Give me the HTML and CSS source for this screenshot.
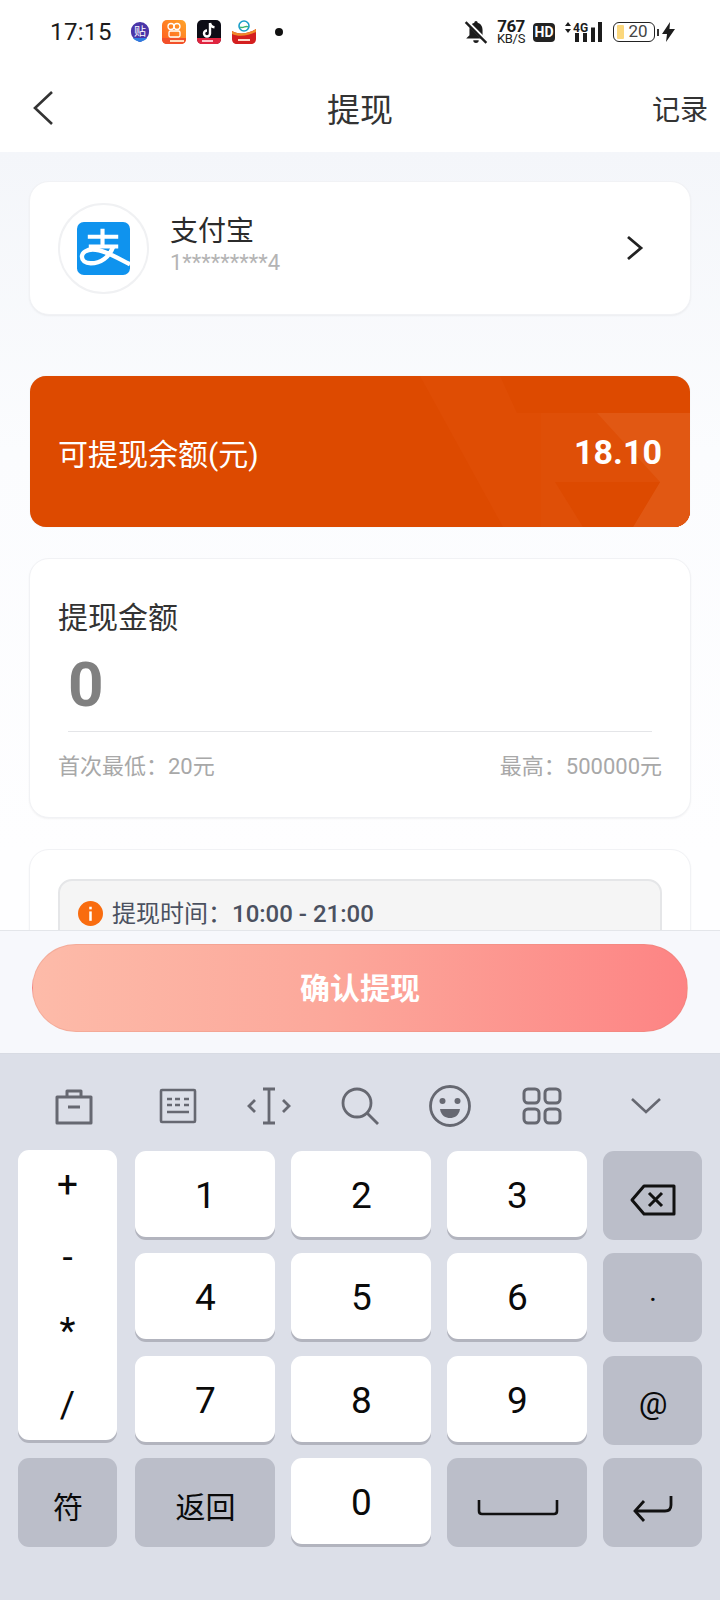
FILE: index.html
```html
<!DOCTYPE html>
<html lang="zh">
<head>
<meta charset="utf-8">
<title>提现</title>
<link rel="stylesheet" href="styles.css">
</head>
<body>
<div class="page">
  <div class="status">
    <span class="time">17:15</span>
    <svg class="app app-tie" viewBox="0 0 20 24"><path d="M10 2a9 9 0 0 1 9 10c0 5-4 8-9 10C5 20 1 17 1 12a9 9 0 0 1 9-10z" fill="#4a35a8"/><path d="M3 18c2 3 5 3 7 4 2-1 5-1 7-4z" fill="#2f7de0"/><text x="10" y="16" class="app-txt">贴</text></svg>
    <svg class="app app-ks" viewBox="0 0 24 24"><defs><linearGradient id="ks" x1="0" y1="1" x2="1" y2="0"><stop offset="0" stop-color="#ff5a1e"/><stop offset="1" stop-color="#ffa52a"/></linearGradient></defs><rect width="24" height="24" rx="5" fill="url(#ks)"/><circle cx="9" cy="6.5" r="3" fill="none" stroke="#fff" stroke-width="1.3"/><circle cx="15" cy="6.5" r="3" fill="none" stroke="#fff" stroke-width="1.3"/><rect x="7" y="11" width="11" height="6" rx="1.5" fill="none" stroke="#fff" stroke-width="1.3"/><path d="M0 18h24v1c0 3-2 5-5 5H5c-3 0-5-2-5-5z" fill="#f2502a"/><rect x="8" y="20" width="14" height="2" fill="#ffe0c0"/></svg>
    <svg class="app app-tt" viewBox="0 0 24 24"><rect width="24" height="24" rx="5" fill="#0d0d16"/><path d="M13 3v10.5a3 3 0 1 1-3-3M13 3c.4 2.500 2 4 4.500 4.300" fill="none" stroke="#fff" stroke-width="2.400"/><path d="M0 18h24v1c0 3-2 5-5 5H5c-3 0-5-2-5-5z" fill="#e0243f"/><rect x="5" y="20" width="11" height="2" fill="#ffc4cc"/></svg>
    <svg class="app app-cm" viewBox="0 0 24 24"><circle cx="12" cy="6" r="5" fill="none" stroke="#1a9ec9" stroke-width="1.600"/><path d="M8 7c3 2 6-2 8 0" fill="none" stroke="#3bb56b" stroke-width="1.400"/><path d="M0 11c6 4 16 3 24-2v10c0 3-2 5-5 5H5c-3 0-5-2-5-5z" fill="#d41f1f"/><path d="M0 11c6 4 16 3 24-2v3c-8 4-18 5-24 2z" fill="#f08a2a"/><rect x="6" y="19" width="12" height="2" fill="#ffd9c9"/></svg>
    <span class="dot"></span>
    <span class="status-space"></span>
    <svg class="bell" viewBox="0 0 22 22"><path d="M11 1c-.9 0-1.500.7-1.500 1.500C6.500 3.300 5 6.300 5 9v5l-3 3h18l-3-3V9c0-2.700-1.500-5.700-4.500-6.500C12.500 1.700 11.900 1 11 1zM8.500 18.500a2.500 2.500 0 0 0 5 0z" fill="#1c1c1c"/><path d="M2.500 1.500L21 20" stroke="#fff" stroke-width="3.500"/><path d="M1.500 2L20.500 21" stroke="#1c1c1c" stroke-width="2.200"/></svg>
    <span class="speed"><b>767</b><i>KB/S</i></span>
    <span class="hd">HD</span>
    <span class="net">
      <svg viewBox="0 0 40 22" class="net-svg"><path d="M1 5l3-4 3 4zM1 8l3 4 3-4z" fill="#1c1c1c"/><text x="9" y="11" class="net-txt">4G</text><rect x="11" y="12" width="4" height="9" fill="#1c1c1c"/><rect x="19" y="12" width="4" height="9" fill="#1c1c1c"/><rect x="27" y="6.500" width="4" height="14.500" fill="#1c1c1c"/><rect x="34" y="1" width="4" height="20" fill="#1c1c1c"/></svg>
    </span>
    <span class="battery"><span class="bat-fill"></span><span class="bat-num">20</span></span>
    <span class="nub"></span>
    <svg class="bolt" viewBox="0 0 13 20"><path d="M8 0L0 12h5l-1 8 9-13H7.500z" fill="#1c1c1c"/></svg>
  </div>

  <header class="header">
    <svg class="back" viewBox="0 0 22 36"><path d="M20 2L3 18l17 16" fill="none" stroke="#333" stroke-width="2.600"/></svg>
    <h1 class="title">提现</h1>
    <span class="record">记录</span>
  </header>

  <main class="main">
    <section class="card pay">
      <div class="logo-ring">
        <svg class="logo" viewBox="0 0 54 54"><rect width="54" height="54" rx="7" fill="#0f93ee"/><path d="M26 7v18M11 15h31M12 25h30" fill="none" stroke="#fff" stroke-width="4.200"/><path d="M37 25C33 36 24 42 14 42 8 42 5 39 5 35.500 5 31 10 28 16 28c10 0 22 7 38 15" fill="none" stroke="#fff" stroke-width="4.400"/></svg>
      </div>
      <div class="pay-text">
        <div class="pay-name">支付宝</div>
        <div class="pay-acc">1*********4</div>
      </div>
      <svg class="chev" viewBox="0 0 18 26"><path d="M2 2l13 11L2 24" fill="none" stroke="#222" stroke-width="2.800"/></svg>
    </section>

    <section class="balance">
      <svg class="balance-bg" viewBox="0 0 660 151" preserveAspectRatio="none"><path d="M390 0h80l17 37h173v114H473z" fill="#df4d04"/><path d="M511 37h149v114H511z" fill="#df4f07"/><path d="M567 37h93v114H603l27-45z" fill="#e15813"/><path d="M525 106h105l-27 45h-50z" fill="#dd4a00"/></svg>
      <span class="bal-label">可提现余额(元)</span>
      <span class="bal-num">18.10</span>
    </section>

    <section class="card amount">
      <div class="amt-title">提现金额</div>
      <div class="amt-val">0</div>
      <div class="amt-line"></div>
      <div class="amt-foot"><span>首次最低：20元</span><span>最高：500000元</span></div>
    </section>

    <section class="card notice">
      <div class="notice-box">
        <svg class="info" viewBox="0 0 24 24"><circle cx="12" cy="12" r="12" fill="#f96c0f"/><rect x="10.800" y="10" width="2.400" height="9" fill="#fff"/><rect x="10.800" y="5.500" width="2.400" height="2.500" fill="#fff"/></svg>
        <span class="notice-text">提现时间：<span class="notice-num">10:00 - 21:00</span></span>
      </div>
    </section>
  </main>

  <div class="footer">
    <button class="confirm">确认提现</button>
  </div>

  <div class="kb">
    <div class="tools">
      <span class="tool"><svg width="40" height="38" viewBox="0 0 40 38"><path d="M3 10h34v26H3zM13 10V4h14v6M14 20h12" fill="none" stroke="#666871" stroke-width="3" stroke-linejoin="round"/></svg></span>
      <span class="tool"><svg width="38" height="36" viewBox="0 0 38 36"><rect x="2" y="2" width="34" height="32" fill="none" stroke="#666871" stroke-width="2.600" rx="1"/><path d="M8 11h5M16 11h5M25 11h5M8 17h5M16 17h5M25 17h5M8 24h22" stroke="#666871" stroke-width="2.600"/></svg></span>
      <span class="tool"><svg width="44" height="38" viewBox="0 0 44 38"><path d="M20 2h12M26 2v34M20 36h12" transform="translate(-4)" fill="none" stroke="#666871" stroke-width="2.800"/><path d="M8 13l-6 6 6 6M36 13l6 6-6 6" fill="none" stroke="#666871" stroke-width="2.800"/></svg></span>
      <span class="tool"><svg width="40" height="40" viewBox="0 0 40 40"><circle cx="17" cy="17" r="14" fill="none" stroke="#666871" stroke-width="2.800"/><path d="M27 27l11 11" stroke="#666871" stroke-width="2.800"/></svg></span>
      <span class="tool"><svg width="44" height="42" viewBox="0 0 44 42"><circle cx="22" cy="21" r="19.500" fill="none" stroke="#666871" stroke-width="2.800"/><circle cx="14.500" cy="16" r="3" fill="#666871"/><circle cx="29.500" cy="16" r="3" fill="#666871"/><path d="M12 24h20c-1 7-6 9-10 9s-9-2-10-9z" fill="#666871"/></svg></span>
      <span class="tool"><svg width="40" height="38" viewBox="0 0 40 38"><rect x="2" y="2" width="15" height="14" rx="4" fill="none" stroke="#666871" stroke-width="3"/><rect x="23" y="2" width="15" height="14" rx="4" fill="none" stroke="#666871" stroke-width="3"/><rect x="2" y="22" width="15" height="14" rx="4" fill="none" stroke="#666871" stroke-width="3"/><rect x="23" y="22" width="15" height="14" rx="4" fill="none" stroke="#666871" stroke-width="3"/></svg></span>
      <span class="tool"><svg width="32" height="20" viewBox="0 0 32 20"><path d="M2 3l14 13L30 3" fill="none" stroke="#666871" stroke-width="2.600"/></svg></span>
    </div>
    <div class="keys">
      <div class="key sym"><span>+</span><span>-</span><span>*</span><span>/</span></div>
      <div class="key">1</div>
      <div class="key">2</div>
      <div class="key">3</div>
      <div class="key gray"><svg class="del" width="46" height="32" viewBox="0 0 46 32"><path d="M14 2h30v28H14L2 16z" fill="none" stroke="#111" stroke-width="3" stroke-linejoin="round"/><path d="M19 9l13 13M32 9L19 22" stroke="#111" stroke-width="3"/></svg></div>
      <div class="key">4</div>
      <div class="key">5</div>
      <div class="key">6</div>
      <div class="key gray small">·</div>
      <div class="key">7</div>
      <div class="key">8</div>
      <div class="key">9</div>
      <div class="key gray at">@</div>
      <div class="key gray cjk first">符</div>
      <div class="key gray cjk">返回</div>
      <div class="key">0</div>
      <div class="key gray"><svg class="space" width="82" height="18" viewBox="0 0 82 18"><path d="M2 1v11c0 2 1 3 3 3h72c2 0 3-1 3-3V1" fill="none" stroke="#111" stroke-width="2.600"/></svg></div>
      <div class="key gray"><svg class="enter" width="40" height="30" viewBox="0 0 40 30"><path d="M38 1v9c0 4-2 6-6 6H3" fill="none" stroke="#111" stroke-width="2.800"/><path d="M11 6L2 16l9 10" fill="none" stroke="#111" stroke-width="2.800"/></svg></div>
    </div>
  </div>
</div>
</body>
</html>
```

FILE: styles.css
```css
* { box-sizing: border-box; }
html, body { margin: 0; padding: 0; }
body {
  font-family: Roboto, "Noto Sans CJK SC", sans-serif;
  background: #fff;
}
.page {
  width: 720px;
  height: 1600px;
  overflow: hidden;
  display: flex;
  flex-direction: column;
}

/* status bar */
.status {
  height: 64px;
  flex: none;
  display: flex;
  align-items: center;
  padding-left: 50px;
  color: #1c1c1c;
}
.time { font-size: 24px; width: 80px; letter-spacing: .4px; }
.app { flex: none; display: block; }
.app-tie { width: 20px; height: 24px; margin-right: 12px; }
.app-ks, .app-tt { width: 24px; height: 24px; margin-right: 11px; }
.app-cm { width: 24px; height: 24px; margin-right: 19px; }
.app-txt { font: 12px "Noto Sans CJK SC", sans-serif; fill: #fff; text-anchor: middle; }
.dot { width: 8px; height: 8px; border-radius: 50%; background: #111; }
.status-space { flex: 1; }
.bell { width: 24px; height: 24px; margin-right: 9px; }
.speed { display: flex; flex-direction: column; align-items: center; width: 28px; margin-right: 8px; line-height: 1; }
.speed b { font-size: 17px; line-height: 13px; font-weight: 700; letter-spacing: -.6px; }
.speed i { font-style: normal; font-size: 13px; line-height: 12px; letter-spacing: -.3px; }
.hd { width: 22px; height: 19px; border-radius: 4px; background: #222; color: #fff; font-size: 14px; font-weight: 700; line-height: 19px; text-align: center; margin-right: 9px; }
.net { width: 40px; height: 22px; margin-right: 9px; display: block; }
.net-svg { display: block; width: 40px; height: 22px; }
.net-txt { font: 700 12px Roboto, sans-serif; fill: #1c1c1c; }
.battery { position: relative; width: 42px; height: 20px; border: 1.500px solid #222; border-radius: 6px; display: block; overflow: hidden; }
.bat-fill { position: absolute; left: 3px; top: 2px; bottom: 2px; width: 7px; background: #fbd77c; border-radius: 1px; }
.bat-num { position: absolute; left: 10px; right: 2px; top: 0; text-align: center; font-size: 17px; line-height: 17px; color: #444; }
.nub { width: 2px; height: 7px; background: #333; margin: 0 3px 0 2px; }
.bolt { width: 13px; height: 20px; margin-right: 45px; }

/* header */
.header {
  height: 88px;
  flex: none;
  display: flex;
  align-items: center;
  justify-content: space-between;
  padding: 0 12px 0 32px;
  position: relative;
}
.back { width: 22px; height: 36px; }
.title {
  margin: 0;
  position: absolute;
  left: 0;
  right: 0;
  text-align: center;
  font-size: 33px;
  font-weight: 400;
  color: #333;
  pointer-events: none;
}
.record { font-size: 28px; color: #333; }

/* main */
.main {
  flex: none;
  height: 778px;
  overflow: hidden;
  background: linear-gradient(180deg, #f4f6fa 0, #fbfcfe 300px, #fefeff 700px);
  padding: 29px 29px 0;
  display: flex;
  flex-direction: column;
  gap: 31px;
}
.card {
  flex: none;
  background: #fff;
  border-radius: 20px;
  border: 1px solid #f1f2f5;
  box-shadow: 0 1px 2px rgba(0, 0, 0, .05);
}
.pay {
  height: 134px;
  margin-bottom: 30px;
  display: flex;
  align-items: center;
  padding: 0 46px 0 28px;
}
.logo-ring {
  width: 91px;
  height: 91px;
  border-radius: 50%;
  border: 2px solid #f0f1f3;
  display: flex;
  align-items: center;
  justify-content: center;
  margin-right: 21px;
}
.logo { width: 53px; height: 53px; display: block; }
.pay-text { flex: 1; }
.pay-name { font-size: 28px; line-height: 36px; color: #2b2b2b; margin-top: -6px; }
.pay-acc { font-size: 22px; line-height: 26px; color: #b4b4b4; }
.chev { width: 18px; height: 26px; }

.balance {
  flex: none;
  position: relative;
  height: 151px;
  margin: 0 1px;
  border-radius: 16px;
  overflow: hidden;
  background: #dd4a00;
  display: flex;
  align-items: center;
  justify-content: space-between;
  padding: 0 28px;
  color: #fff;
  box-shadow: 0 0 1px rgba(0, 0, 0, .15);
}
.balance-bg { position: absolute; left: 0; top: 0; width: 100%; height: 100%; }
.bal-label { position: relative; font-size: 30px; }
.bal-num { position: relative; font-size: 34px; font-weight: 700; }

.amount { height: 260px; padding: 39px 28px 0; }
.amt-title { font-size: 30px; line-height: 40px; color: #333; }
.amt-val { font-size: 62px; font-weight: 700; line-height: 72px; color: #808080; margin: 11px 0 0 10px; }
.amt-line { height: 1px; background: #e4e5e8; margin: 10px 10px 0; }
.amt-foot { display: flex; justify-content: space-between; font-size: 22px; line-height: 30px; color: #a8a8a8; margin-top: 20px; }

.notice { height: 240px; padding: 29px 28px 0; }
.notice-box {
  height: 160px;
  border: 2px solid #e5e6e8;
  border-radius: 14px;
  background: #f5f5f5;
  display: flex;
  align-items: flex-start;
  padding: 20px 18px 0;
}
.info { width: 25px; height: 25px; margin-right: 9px; flex: none; }
.notice-text { font-size: 24px; line-height: 26px; color: #4b5160; }
.notice-num { font-weight: 500; }

/* footer */
.footer {
  height: 123px;
  flex: none;
  background: #f7f8fc;
  border-top: 1px solid #e4e6ea;
  padding: 13px 32px 0;
}
.confirm {
  width: 656px;
  height: 88px;
  border-radius: 44px;
  border: 1px solid rgba(220, 130, 110, .25);
  background: linear-gradient(90deg, #fdbba9 0, #fca89b 45%, #fd8484 100%);
  color: #fff;
  font: 700 30px "Noto Sans CJK SC", sans-serif;
  padding: 0 0 5px;
  display: block;
}

/* keyboard */
.kb {
  flex: none;
  height: 547px;
  background: #dcdfe8;
  border-top: 1px solid #d8dbe3;
  padding: 0 18px;
}
.tools {
  height: 97px;
  padding-top: 7px;
  display: grid;
  grid-template-columns: 112px 96px 86px 96px 84px 100px 108px;
  align-items: center;
}
.tool { display: flex; justify-content: center; align-items: center; }
.tool svg { display: block; }
.keys {
  display: grid;
  grid-template-columns: 101px 140px 140px 140px 99px;
  grid-auto-rows: 89px;
  column-gap: 16px;
  row-gap: 13.330px;
}
.key {
  background: #fff;
  border-radius: 11px;
  height: 86px;
  box-shadow: 0 3px 0 #b2b4be;
  display: flex;
  align-items: center;
  justify-content: center;
  font-size: 37px;
  color: #0a0a0a;
  padding: 3px 0 0 1px;
}
.key.gray {
  background: #bbbec9;
  height: 89px;
  box-shadow: none;
}
.first { width: 99px; }
.sym {
  grid-row: 1 / span 3;
  width: 99px;
  height: auto;
  margin: -1px 0 5px;
  flex-direction: column;
  justify-content: space-between;
  padding: 15px 0 15px;
}
.sym span { line-height: 40px; }
.small { font-size: 30px; }
.at { font-size: 32px; padding-top: 6px; }
.cjk { font-family: "Noto Sans CJK SC", sans-serif; font-size: 30px; padding-top: 6px; }
.del { margin-top: 6px; }
.space { margin-top: 9px; }
.enter { margin-top: 13px; }
```
